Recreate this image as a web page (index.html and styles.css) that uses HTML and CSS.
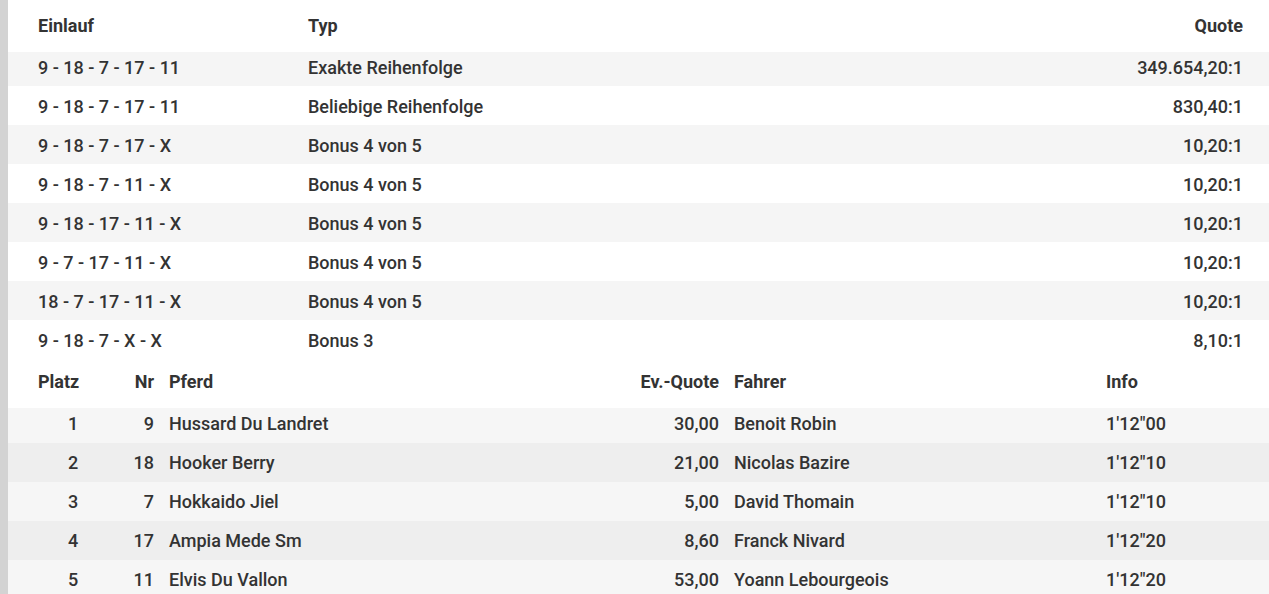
FILE: index.html
```html
<!DOCTYPE html>
<html lang="de">
<head>
    <meta charset="UTF-8">
    <title>Ergebnis</title>
    <link rel="stylesheet" href="styles.css">
</head>
<body>

<div class="ergebnis">

    <!-- Quoten -->
    <table class="tabelle quoten">
        <colgroup>
            <col class="c-einlauf">
            <col class="c-typ">
            <col>
        </colgroup>
        <thead>
        <tr>
            <th>Einlauf</th>
            <th>Typ</th>
            <th class="rechts">Quote</th>
        </tr>
        </thead>
        <tbody>
        <tr><td>9 - 18 - 7 - 17 - 11</td><td>Exakte Reihenfolge</td><td class="rechts">349.654,20:1</td></tr>
        <tr><td>9 - 18 - 7 - 17 - 11</td><td>Beliebige Reihenfolge</td><td class="rechts">830,40:1</td></tr>
        <tr><td>9 - 18 - 7 - 17 - X</td><td>Bonus 4 von 5</td><td class="rechts">10,20:1</td></tr>
        <tr><td>9 - 18 - 7 - 11 - X</td><td>Bonus 4 von 5</td><td class="rechts">10,20:1</td></tr>
        <tr><td>9 - 18 - 17 - 11 - X</td><td>Bonus 4 von 5</td><td class="rechts">10,20:1</td></tr>
        <tr><td>9 - 7 - 17 - 11 - X</td><td>Bonus 4 von 5</td><td class="rechts">10,20:1</td></tr>
        <tr><td>18 - 7 - 17 - 11 - X</td><td>Bonus 4 von 5</td><td class="rechts">10,20:1</td></tr>
        <tr><td>9 - 18 - 7 - X - X</td><td>Bonus 3</td><td class="rechts">8,10:1</td></tr>
        </tbody>
    </table>

    <!-- Einlauf -->
    <table class="tabelle einlauf">
        <colgroup>
            <col class="c-platz">
            <col class="c-nr">
            <col class="c-pferd">
            <col class="c-evquote">
            <col class="c-fahrer">
            <col>
        </colgroup>
        <thead>
        <tr>
            <th>Platz</th>
            <th class="rechts">Nr</th>
            <th>Pferd</th>
            <th class="rechts">Ev.-Quote</th>
            <th>Fahrer</th>
            <th>Info</th>
        </tr>
        </thead>
        <tbody>
        <tr><td class="mitte">1</td><td class="rechts">9</td><td>Hussard Du Landret</td><td class="rechts">30,00</td><td>Benoit Robin</td><td>1'12"00</td></tr>
        <tr><td class="mitte">2</td><td class="rechts">18</td><td>Hooker Berry</td><td class="rechts">21,00</td><td>Nicolas Bazire</td><td>1'12"10</td></tr>
        <tr><td class="mitte">3</td><td class="rechts">7</td><td>Hokkaido Jiel</td><td class="rechts">5,00</td><td>David Thomain</td><td>1'12"10</td></tr>
        <tr><td class="mitte">4</td><td class="rechts">17</td><td>Ampia Mede Sm</td><td class="rechts">8,60</td><td>Franck Nivard</td><td>1'12"20</td></tr>
        <tr><td class="mitte">5</td><td class="rechts">11</td><td>Elvis Du Vallon</td><td class="rechts">53,00</td><td>Yoann Lebourgeois</td><td>1'12"20</td></tr>
        </tbody>
    </table>

</div>

</body>
</html>
```

FILE: styles.css
```css
body {
    margin: 0;
    background-color: #ffffff;
    font-family: Roboto, "Liberation Sans", Arial, sans-serif;
    color: #333333;
    overflow: hidden;
}

.ergebnis {
    border-left: 8px solid #d3d3d3;
    min-height: 100vh;
}

.tabelle {
    width: 100%;
    border-collapse: collapse;
    table-layout: fixed;
    font-size: 18px;
}

.tabelle th,
.tabelle td {
    padding: 0 7px 0 8px;
    text-align: left;
    white-space: nowrap;
}

.tabelle th:first-child,
.tabelle td:first-child {
    padding-left: 30px;
}

.tabelle th:last-child,
.tabelle td:last-child {
    padding-right: 26px;
}

.tabelle th {
    font-weight: 700;
    color: #333333;
}

.tabelle td {
    font-weight: 500;
    height: 39px;
    line-height: 39px;
    box-sizing: border-box;
}

/* der Kopf überdeckt die erste Zeile ein wenig */
.tabelle tbody tr:first-child td {
    box-shadow: inset 0 5px 0 #ffffff;
}

.quoten th {
    height: 47px;
    padding-top: 4px;
    box-sizing: border-box;
}

.quoten td {
    padding-top: 3px;
    line-height: 36px;
}

.quoten tbody tr:nth-child(odd) td {
    background-color: #f5f5f5;
}

.einlauf th {
    height: 45px;
}

.einlauf tbody tr:first-child td {
    box-shadow: inset 0 4px 0 #ffffff;
}

.einlauf tbody tr:nth-child(odd) td {
    background-color: #f6f6f6;
}

.einlauf tbody tr:nth-child(even) td {
    background-color: #eeeeee;
}

.rechts {
    text-align: right !important;
}

.mitte {
    text-align: center !important;
}

.c-einlauf { width: 292px; }
.c-typ { width: 400px; }

.c-platz { width: 107px; }
.c-nr { width: 46px; }
.c-pferd { width: 400px; }
.c-evquote { width: 165px; }
.c-fahrer { width: 372px; }
```
